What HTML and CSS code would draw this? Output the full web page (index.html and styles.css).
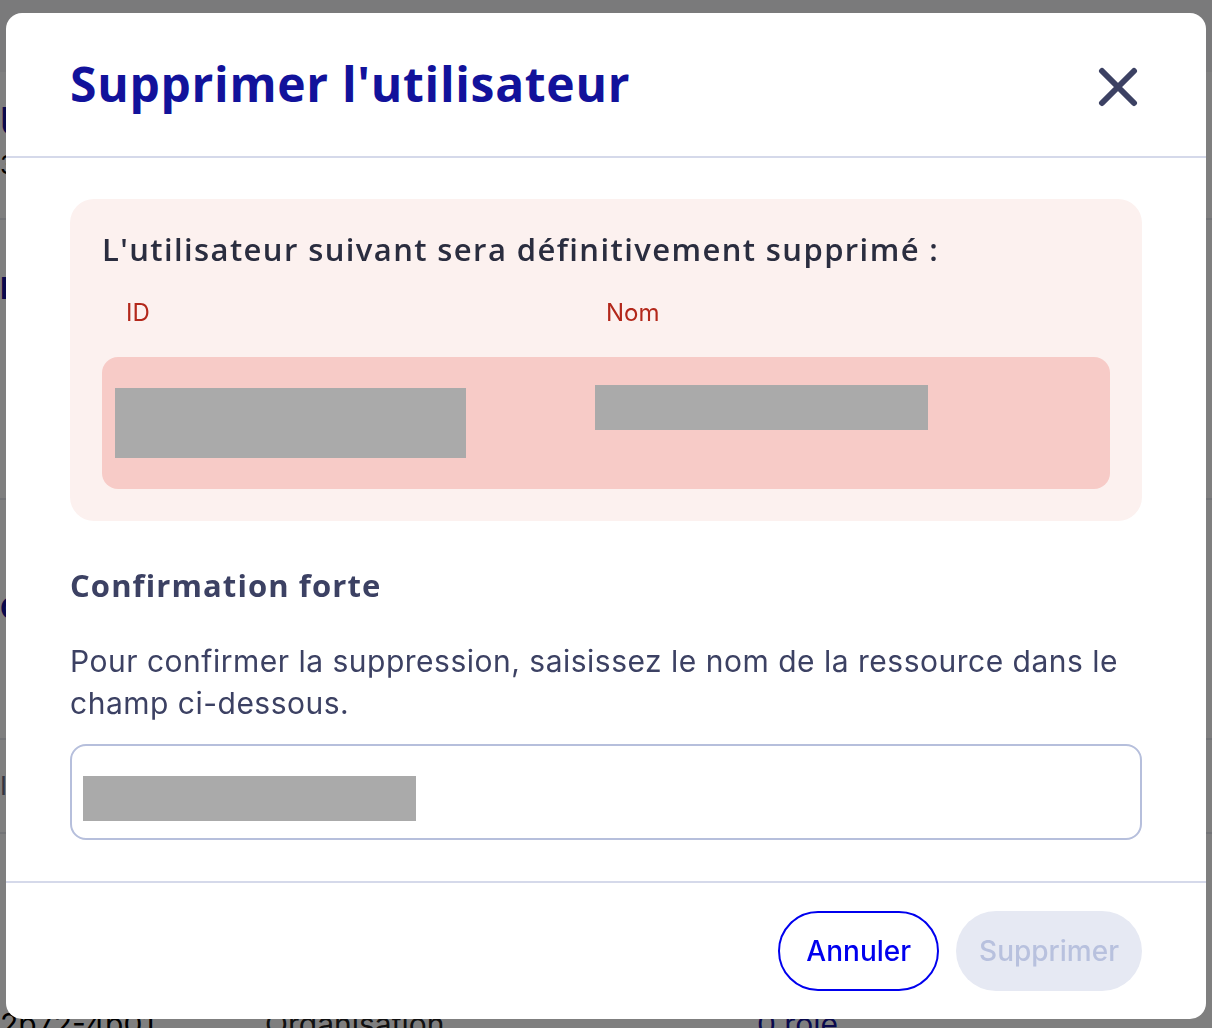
FILE: index.html
```html
<!DOCTYPE html>
<html lang="fr">
<head>
    <meta charset="UTF-8">
    <meta name="viewport" content="width=device-width, initial-scale=1.0">
    <title>Supprimer l'utilisateur</title>
    <link rel="stylesheet" href="styles.css">
</head>
<body>
    <div class="page">
        <div class="page-top"></div>
        <div class="page-head">
            <h2 class="page-title">Utilisateurs</h2>
            <p class="page-count">3 utilisateurs</p>
        </div>
        <div class="page-section">
            <a class="page-link">Inviter</a>
        </div>
        <div class="page-section tall">
            <a class="page-link">Créer</a>
        </div>
        <div class="page-table-head">Identifiant</div>
        <div class="page-row">
            <span class="cell-id">2b72-4b01</span>
            <span class="cell-type">Organisation</span>
            <span class="cell-role">0 role</span>
        </div>
    </div>

    <div class="overlay">
        <div class="modal">
            <div class="modal-header">
                <h1>Supprimer l'utilisateur</h1>
                <button class="close-btn" aria-label="Fermer">
                    <svg width="40" height="40" viewBox="0 0 40 40">
                        <path d="M4 4 L36 36 M36 4 L4 36" stroke="#3c4163" stroke-width="6" stroke-linecap="round" fill="none"/>
                    </svg>
                </button>
            </div>

            <div class="modal-body">
                <div class="alert">
                    <h3>L'utilisateur suivant sera définitivement supprimé :</h3>
                    <div class="resource-table">
                        <div class="resource-labels">
                            <span>ID</span>
                            <span>Nom</span>
                        </div>
                        <div class="resource-row">
                            <div class="resource-cell">
                                <div class="redacted redacted-id"></div>
                            </div>
                            <div class="resource-cell">
                                <div class="redacted redacted-name"></div>
                            </div>
                        </div>
                    </div>
                </div>

                <h4 class="confirm-title">Confirmation forte</h4>
                <p class="confirm-text">Pour confirmer la suppression, saisissez le nom de la ressource dans le champ ci-dessous.</p>
                <div class="confirm-input">
                    <div class="redacted redacted-input"></div>
                </div>
            </div>

            <div class="modal-footer">
                <button class="btn btn-outline">Annuler</button>
                <button class="btn btn-disabled" disabled>Supprimer</button>
            </div>
        </div>
    </div>
</body>
</html>
```

FILE: styles.css
```css
* {
    margin: 0;
    padding: 0;
    box-sizing: border-box;
}

body {
    font-family: Inter, 'Noto Sans', sans-serif;
    background: #fff;
    color: #3c4163;
    height: 1028px;
    overflow: hidden;
}

/* Page behind the modal */
.page {
    display: flex;
    flex-direction: column;
}

.page-top {
    height: 72px;
    background: #f4f4f6;
}

.page-head {
    height: 148px;
    padding-top: 22px;
    border-bottom: 2px solid #e6e8ef;
}

.page-title {
    font-size: 40px;
    color: #12129b;
    line-height: 56px;
}

.page-count {
    font-size: 26px;
    color: #000;
    line-height: 30px;
}

.page-section {
    height: 280px;
    padding-top: 50px;
    border-bottom: 2px solid #e6e8ef;
}

.page-section.tall {
    height: 240px;
    padding-top: 90px;
}

.page-link {
    font-size: 30px;
    font-weight: 700;
    color: #12129b;
}

.page-table-head {
    height: 94px;
    padding-top: 30px;
    font-size: 26px;
    color: #666a80;
    border-bottom: 2px solid #e6e8ef;
}

.page-row {
    display: flex;
    padding-top: 172px;
    font-size: 30px;
    color: #000;
}

.cell-id {
    width: 265px;
}

.cell-type {
    width: 492px;
    color: #222;
}

.cell-role {
    color: #12129b;
}

/* Modal */
.overlay {
    position: fixed;
    inset: 0;
    background: rgba(0, 0, 0, 0.5);
    padding: 13px 6px 9px;
}

.modal {
    background: #fff;
    border-radius: 16px;
    width: 1200px;
    display: flex;
    flex-direction: column;
}

.modal-header {
    height: 145px;
    padding: 0 64px;
    display: flex;
    align-items: center;
    justify-content: space-between;
    border-bottom: 2px solid #d5d9ea;
}

.modal-header h1 {
    font-family: 'Open Sans', sans-serif;
    font-size: 48px;
    font-weight: 700;
    color: #12129b;
    letter-spacing: 0.7px;
    margin-top: -2px;
}

.close-btn {
    background: none;
    border: none;
    width: 40px;
    height: 40px;
    margin-right: 4px;
    margin-top: 4px;
    cursor: pointer;
    display: flex;
}

.modal-body {
    padding: 41px 64px 41px;
}

.alert {
    background: #fcf1ef;
    border-radius: 24px;
    padding: 30px 32px 32px;
}

.alert h3 {
    font-family: 'Open Sans', sans-serif;
    font-size: 31px;
    font-weight: 600;
    color: #2a2d3f;
    line-height: 40px;
    letter-spacing: 1.4px;
}

.resource-labels {
    display: grid;
    grid-template-columns: 480px 480px;
    padding: 28px 0 28px;
    font-size: 24px;
    line-height: 32px;
    color: #b3281b;
}

.resource-labels span {
    padding-left: 24px;
}

.resource-row {
    display: grid;
    grid-template-columns: 480px 480px 1fr;
    height: 132px;
    background: #f7cbc7;
    border-radius: 16px;
}

.resource-cell {
    padding-left: 13px;
}

.redacted {
    background: #aaaaaa;
}

.redacted-id {
    width: 351px;
    height: 70px;
    margin-top: 31px;
}

.redacted-name {
    width: 333px;
    height: 45px;
    margin-top: 28px;
}

.confirm-title {
    font-family: 'Open Sans', sans-serif;
    font-size: 31px;
    font-weight: 700;
    color: #3c4163;
    line-height: 40px;
    letter-spacing: 1.1px;
    margin-top: 44px;
}

.confirm-text {
    font-size: 30px;
    line-height: 42px;
    letter-spacing: 0.5px;
    color: #3c4163;
    margin-top: 35px;
}

.confirm-input {
    margin-top: 20px;
    height: 96px;
    border: 2px solid #b6bfdc;
    border-radius: 16px;
    padding: 30px 11px;
}

.redacted-input {
    width: 333px;
    height: 45px;
}

.modal-footer {
    border-top: 2px solid #d5d9ea;
    padding: 28px 64px 28px;
    display: flex;
    justify-content: flex-end;
    gap: 17px;
}

.btn {
    font-family: Inter, sans-serif;
    font-size: 28px;
    font-weight: 500;
    height: 80px;
    border-radius: 40px;
    padding: 0 26px;
}

.btn-outline {
    background: #fff;
    border: 2px solid #0000ee;
    color: #0000ee;
    cursor: pointer;
}

.btn-disabled {
    background: #e6e9f3;
    border: none;
    color: #b8c1de;
    padding: 0 23px;
}
```
